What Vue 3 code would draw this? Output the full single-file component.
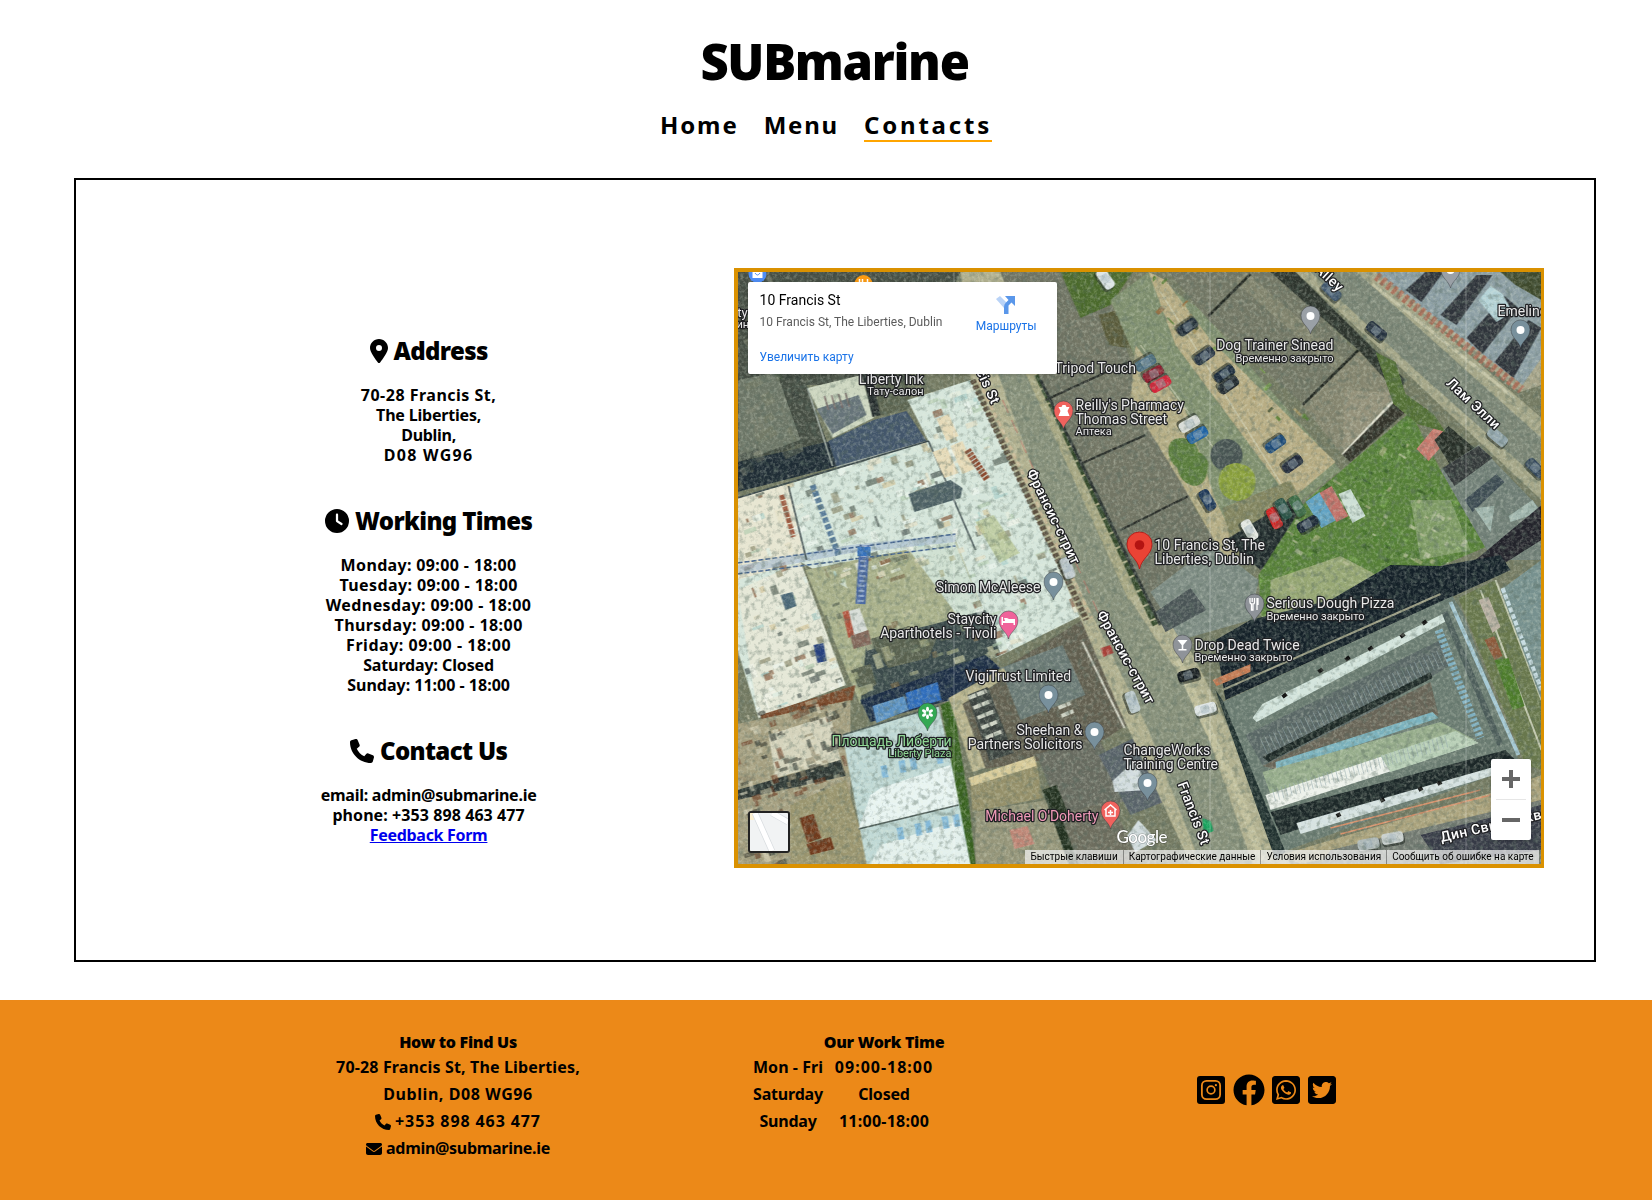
<script setup>
const icons = {
  pin: { w: 384, d: 'M215.7 499.2C267 435 384 279.4 384 192C384 86 298 0 192 0S0 86 0 192c0 87.4 117 243 168.3 307.2c12.3 15.3 35.1 15.3 47.4 0zM192 128a64 64 0 1 1 0 128 64 64 0 1 1 0-128z' },
  clock: { w: 512, d: 'M256 0a256 256 0 1 1 0 512A256 256 0 1 1 256 0zM232 120V256c0 8 4 15.5 10.7 20l96 64c11 7.4 25.9 4.4 33.3-6.7s4.4-25.9-6.7-33.3L280 243.2V120c0-13.3-10.7-24-24-24s-24 10.7-24 24z' },
  phone: { w: 512, d: 'M164.9 24.6c-7.7-18.6-28-28.5-47.4-23.2l-88 24C12.1 30.2 0 46 0 64C0 311.4 200.6 512 448 512c18 0 33.8-12.1 38.6-29.5l24-88c5.3-19.4-4.6-39.7-23.2-47.4l-96-40c-16.3-6.8-35.2-2.1-46.3 11.6L304.7 368C234.3 334.7 177.3 277.7 144 207.3L193.3 167c13.7-11.2 18.4-30 11.6-46.3l-40-96z' },
  mail: { w: 512, d: 'M48 64C21.5 64 0 85.5 0 112c0 15.1 7.1 29.3 19.2 38.4L236.8 313.6c11.4 8.5 27 8.5 38.4 0L492.8 150.4c12.1-9.1 19.2-23.3 19.2-38.4c0-26.5-21.5-48-48-48H48zM0 176V384c0 35.3 28.7 64 64 64H448c35.3 0 64-28.7 64-64V176L294.4 339.2c-22.8 17.1-54 17.1-76.8 0L0 176z' },
}

// Each line is [text, tracking in px]
const sections = [
  { title: 'Address', icon: 'pin', lines: [['70-28 Francis St,', 0.5], ['The Liberties,', -0.2], ['Dublin,', -0.3], ['D08 WG96', 1.3]] },
  {
    title: 'Working Times',
    icon: 'clock',
    lines: [
      ['Monday: 09:00 - 18:00', 0.35], ['Tuesday: 09:00 - 18:00', 0.4], ['Wednesday: 09:00 - 18:00', 0.4],
      ['Thursday: 09:00 - 18:00', 0.43], ['Friday: 09:00 - 18:00', 0.53], ['Saturday: Closed', -0.12], ['Sunday: 11:00 - 18:00', 0],
    ],
  },
  { title: 'Contact Us', icon: 'phone', lines: [['email: admin@submarine.ie', -0.26], ['phone: +353 898 463 477', 0.08]], link: 'Feedback Form' },
]

const hours = [
  [['Mon - Fri', 0.05], ['09:00-18:00', 1]],
  [['Saturday', -0.2], ['Closed', -0.2]],
  [['Sunday', -0.2], ['11:00-18:00', 0.25]],
]
const track = (n) => ({ letterSpacing: n + 'px' })

// Seeded generator, so the ground detail is the same on every load
function scatter(seed, count, [x0, y0, x1, y1], size, angle, colors) {
  let s = seed
  const rnd = () => ((s = (s * 16807) % 2147483647) / 2147483647)
  return Array.from({ length: count }, () => ({
    x: x0 + rnd() * (x1 - x0),
    y: y0 + rnd() * (y1 - y0),
    w: size * (0.4 + rnd()),
    h: size * (0.2 + rnd() * 0.5),
    a: angle + (rnd() > 0.7 ? 90 : 0),
    c: colors[Math.floor(rnd() * colors.length)],
  }))
}

const details = [
  { clip: 'site', items: scatter(11, 620, [738, 375, 1090, 780], 10, -20, ['#8b8a6d', '#f4f6ec', '#58645a', '#d3c49a', '#a9cfca', '#845a3e', '#eef6f0', '#b4ccb0', '#e6e0c6', '#4a5552', '#dfeee6', '#e8efe0']) },
  { clip: 'yard', items: scatter(23, 110, [738, 540, 1000, 760], 11, -18, ['#a3a980', '#5b6655', '#c4c6a0', '#7a6a4c', '#8c997a', '#a9ad87']) },
  { clip: 'green', items: scatter(37, 520, [1200, 420, 1500, 660], 7, 30, ['#3d6a28', '#5f9040', '#7fae55', '#2f5424', '#b5b68c', '#4e8033', '#d2d4b8']) },
  { clip: 'topleft', items: scatter(53, 90, [738, 272, 920, 490], 16, 65, ['#5a6153', '#2f3835', '#7a7f68', '#3d4b2f', '#8b8d79']) },
  { clip: 'lowleft', items: scatter(71, 200, [738, 700, 850, 864], 9, -18, ['#dfdac0', '#3b3d33', '#8f8669', '#6b3b22', '#bab596', '#242a26']) },
  { clip: 'hedge', items: scatter(91, 130, [1140, 272, 1340, 470], 7, 45, ['#4f7b2d', '#2d3f22', '#a0905b', '#6c9a3c', '#9a6b3c']) },
]

const cars = [
  [1187, 327, 145, '#1c2733'], [1204, 356, 145, '#263241'], [1224, 374, 145, '#1d2c3d'], [1228, 385, 145, '#222a30'],
  [1275, 444, 145, '#1d4a78'], [1292, 464, 145, '#222a3a'], [1207, 500, 60, '#1c3658'], [1153, 374, 150, '#8d1f2f'],
  [1160, 384, 150, '#d3263a'], [1145, 363, 150, '#4b6d80'], [1189, 424, 150, '#d8dcd8'], [1197, 435, 150, '#1f63a5'],
  [1376, 331, 40, '#24303f'], [1331, 291, 45, '#40566d'], [1497, 437, 40, '#8fa2a8'], [1535, 468, 45, '#33465a'],
  [1274, 518, 65, '#cf2525'], [1283, 509, 60, '#2c5448'], [1297, 506, 60, '#3d6b46'], [1249, 530, 60, '#e6e9e4'],
  [1307, 524, -30, '#1a2635'], [1188, 675, -15, '#141a1e'], [1205, 709, -15, '#dfe5e6'], [1132, 702, 70, '#bcc9cc'],
  [1368, 844, -10, '#aeb8b8'], [1392, 838, -10, '#c8cfce'], [1105, 279, 55, '#dfe7e8'], [1067, 568, 70, '#c3ccd0'],
]

const pins = [
  { x: 1063, y: 429, c: '#f0625d', g: 'bag' },
  { x: 1310, y: 334, c: '#9aa0a6', g: 'dot' },
  { x: 1450, y: 288, c: '#9aa0a6', g: 'dot' },
  { x: 1520, y: 348, c: '#78909c', g: 'dot' },
  { x: 1053, y: 600, c: '#78909c', g: 'dot' },
  { x: 1008, y: 639, c: '#f0629a', g: 'bed' },
  { x: 1048, y: 713, c: '#78909c', g: 'dot' },
  { x: 1094, y: 750, c: '#78909c', g: 'dot' },
  { x: 1147, y: 801, c: '#78909c', g: 'dot' },
  { x: 927, y: 731, c: '#34a853', g: 'flower' },
  { x: 1110, y: 829, c: '#f0625d', g: 'house' },
  { x: 1254, y: 622, c: '#8f9399', g: 'fork' },
  { x: 1182, y: 663, c: '#8f9399', g: 'glass' },
]

const labels = [
  { x: 923, y: 384, t: 'Liberty Ink', a: 'end' },
  { x: 923, y: 395, t: 'Тату-салон', a: 'end', s: 11 },
  { x: 1054, y: 373, t: 'Tripod Touch' },
  { x: 1075, y: 410, t: "Reilly's Pharmacy" },
  { x: 1075, y: 424, t: 'Thomas Street' },
  { x: 1075, y: 435, t: 'Аптека', s: 11 },
  { x: 1333, y: 350, t: 'Dog Trainer Sinead', a: 'end' },
  { x: 1333, y: 362, t: 'Временно закрыто', a: 'end', s: 11 },
  { x: 1497, y: 316, t: 'Emeline' },
  { x: 1154, y: 550, t: '10 Francis St, The' },
  { x: 1154, y: 564, t: 'Liberties, Dublin' },
  { x: 1040, y: 592, t: 'Simon McAleese', a: 'end' },
  { x: 996, y: 624, t: 'Staycity', a: 'end' },
  { x: 996, y: 638, t: 'Aparthotels - Tivoli', a: 'end' },
  { x: 965, y: 681, t: 'VigiTrust Limited' },
  { x: 1082, y: 735, t: 'Sheehan &', a: 'end' },
  { x: 1082, y: 749, t: 'Partners Solicitors', a: 'end' },
  { x: 1123, y: 755, t: 'ChangeWorks' },
  { x: 1123, y: 769, t: 'Training Centre' },
  { x: 1266, y: 608, t: 'Serious Dough Pizza' },
  { x: 1266, y: 620, t: 'Временно закрыто', s: 11 },
  { x: 1194, y: 650, t: 'Drop Dead Twice' },
  { x: 1194, y: 661, t: 'Временно закрыто', s: 11 },
  { x: 951, y: 746, t: 'Площадь Либерти', a: 'end', c: '#8fd694' },
  { x: 951, y: 757, t: 'Liberty Plaza', a: 'end', c: '#8fd694', s: 11 },
  { x: 1098, y: 821, t: "Michael O'Doherty", a: 'end', c: '#f09ab8' },
  { x: 732, y: 317, t: 'rty', s: 13 },
  { x: 736, y: 328, t: 'ин', s: 11 },
]

const streets = [
  { x: 1026, y: 472, r: 64, t: 'Франсис-стрит' },
  { x: 1096, y: 614, r: 61, t: 'Франсис-стрит' },
  { x: 972, y: 364, r: 65, t: 'ncis St' },
  { x: 1177, y: 784, r: 69, t: 'Francis St' },
  { x: 1445, y: 384, r: 43, t: 'Лам Элли' },
  { x: 1305, y: 262, r: 43, t: 'n Alley' },
  { x: 1441, y: 842, r: -13, t: 'Дин Свифт сквер' },
]
const legal = ['Быстрые клавиши', 'Картографические данные', 'Условия использования', 'Сообщить об ошибке на карте']
const ribs = Array.from({ length: 42 }, (_, i) => i)
</script>

<template>
  <div class="page">
    <header class="header">
      <h1 class="brand">SUBmarine</h1>
      <nav class="nav">
        <a class="home">Home</a><a class="menu">Menu</a><a class="active">Contacts</a>
      </nav>
    </header>

    <main class="frame">
      <div class="info">
        <section v-for="s in sections" :key="s.title" class="block">
          <h2>
            <svg class="icon" :viewBox="`0 0 ${icons[s.icon].w} 512`"><path :d="icons[s.icon].d" fill-rule="evenodd" /></svg>
            <span>{{ s.title }}</span>
          </h2>
          <p v-for="l in s.lines" :key="l[0]" :style="track(l[1])">{{ l[0] }}</p>
          <p v-if="s.link"><a class="link">{{ s.link }}</a></p>
        </section>
      </div>

      <div class="map">
        <svg class="ground" viewBox="737.5 272 803 592" preserveAspectRatio="none">
          <defs>
            <filter id="grain" x="0" y="0" width="100%" height="100%">
              <feTurbulence type="fractalNoise" baseFrequency="0.3" numOctaves="4" seed="4" />
              <feColorMatrix type="matrix" values="0 0 0 0 0.85  0 0 0 0 0.9  0 0 0 0 0.75  1.6 1.6 0 0 -1.4" />
            </filter>
            <filter id="grainDark" x="0" y="0" width="100%" height="100%">
              <feTurbulence type="fractalNoise" baseFrequency="0.18" numOctaves="4" seed="9" />
              <feColorMatrix type="matrix" values="0 0 0 0 0.1  0 0 0 0 0.15  0 0 0 0 0.12  2 2 0 0 -1.9" />
            </filter>
            <clipPath id="site"><path d="M738 498L788 484 928 441 907 400 970 380 1082 615 995 658 950 550 850 590 800 562 845 685 758 718 738 650z" /></clipPath>
            <clipPath id="yard"><path d="M805 570L955 540 1000 655 860 705z" /></clipPath>
            <clipPath id="green"><path d="M1306 500L1410 412 1440 470 1490 545 1440 566 1262 640 1258 575z" /></clipPath>
            <clipPath id="topleft"><path d="M738 272H960L905 385 806 385 835 465 738 490z" /></clipPath>
            <clipPath id="lowleft"><path d="M738 718L845 685 850 864 738 864z" /></clipPath>
            <clipPath id="hedge"><path d="M1152 272L1180 285 1330 440 1318 456 1152 310z" /></clipPath>
          </defs>
          <rect x="737" y="272" width="804" height="592" fill="#747a62" />

          <!-- north-west roofs -->
          <path d="M737 272H960L905 385 806 385 835 465 737 490z" fill="#454d43" />
          <path d="M738 380L776 372 800 440 738 462z" fill="#6d7667" />
          <path d="M737 462L835 440 838 466 737 492z" fill="#1f2c35" />
          <g :clip-path="`url(#${details[3].clip})`" opacity=".4">
            <rect v-for="(r, i) in details[3].items" :key="i" :x="r.x" :y="r.y" :width="r.w" :height="r.h" :fill="r.c" :transform="`rotate(${r.a} ${r.x} ${r.y})`" />
          </g>
          <path d="M807 388L861 375 873 418 832 438z" fill="#cdd6c0" />
          <path d="M816 409L858 395 866 415 832 434z" fill="#67747a" />
          <path d="M824 396l4 14M831 395l4 14M838 394l4 14M845 393l4 14" stroke="#7a6b68" stroke-width="1.5" />
          <path d="M828 441L873 420 906 411 926 441 836 467z" fill="#43566b" />
          <path d="M866 385L907 382 912 408 878 416z" fill="#5c6450" />
          <path d="M862 375L872 417 880 415 870 373z" fill="#232a2b" />
          <path d="M807 388L832 466M836 467L928 441" stroke="#aab4ac" stroke-width="1.5" />

          <!-- construction site -->
          <path d="M737 498L788 484 928 441 907 400 970 380 1082 615 995 658 950 550 850 590 800 562 845 685 758 718 737 650z" fill="#d6e6dc" />
          <path d="M737 498L788 484 805 560 737 580z" fill="#e8e6d2" />
          <path d="M737 590L800 562 845 685 758 718z" fill="#e6e8d8" />
          <path d="M805 570L955 540 1000 655 860 705z" fill="#a9b08a" />
          <path d="M905 545L950 530 1000 655 960 620z" fill="#cfe0d2" />
          <path d="M866 640L930 625 985 610 1000 655 860 705z" fill="#3b4a4b" />
          <path d="M850 670l20-6 6 20-14 12zM868 640l40-14 30 8-10 24-40 10z" fill="#59614f" />
          <g v-for="d in details.slice(0, 2)" :key="d.clip" :clip-path="`url(#${d.clip})`" opacity=".7">
            <rect v-for="(r, i) in d.items" :key="i" :x="r.x" :y="r.y" :width="r.w" :height="r.h" :fill="r.c" :transform="`rotate(${r.a} ${r.x} ${r.y})`" />
          </g>
          <path d="M737 570L850 549 955 538" stroke="#a9bdd2" stroke-width="8" fill="none" opacity=".7" />
          <path d="M737 563L955 534M737 574L955 546" stroke="#42618c" stroke-width="1.500" stroke-dasharray="5 2" />
          <path d="M864 545L860 604" stroke="#4a69a3" stroke-width="10" />
          <path d="M864 545L860 604" stroke="#8fa6cd" stroke-width="6" stroke-dasharray="2 3" />
          <path d="M812 485L838 555" stroke="#587b99" stroke-width="6" stroke-dasharray="5 2" />
          <path d="M857 547h13v9h-13z" fill="#3571bd" />
          <path d="M845 612l14-4 8 22-16 8z" fill="#d8ddd8" /><path d="M842 612l6-2 6 26-6 2z" fill="#b0523d" /><path d="M850 636l18-6 3 14-18 5z" fill="#82675a" />
          <path d="M788 486L806 560M928 441L975 550M737 498L928 441" stroke="#384549" stroke-width="1.500" fill="none" />
          <path d="M908 494L950 480 962 488 960 498 914 512z" fill="#4d6065" />
          <path d="M936 419L948 414 958 436 946 441zM932 452l14-5 12 26-14 5zM950 446l12-5 12 28-12 5z" fill="#e6dab8" />
          <path d="M967 450L987 480" stroke="#8c4a30" stroke-width="7" stroke-dasharray="3 1" /><path d="M781 495l12 42" stroke="#a05a40" stroke-width="5" stroke-dasharray="5 1" />
          <path d="M975 522l18-7 26 38-20 10z" fill="#b3c08a" opacity=".7" />
          <path d="M760 715L855 685 852 700 762 728z" fill="#7a4a2c" />
          <path d="M813 645l10-2 3 18-9 2z" fill="#26407e" /><path d="M780 595l12-3 4 14-11 4z" fill="#4a6778" />

          <!-- south-west -->
          <path d="M737 724L850 700 850 864 737 864z" fill="#a59f80" />
          <path d="M768 735L830 715 840 760 775 778z" fill="#d5d3bc" />
          <path d="M737 790L840 760 845 776 737 800z" fill="#2f3835" />
          <g :clip-path="`url(#${details[4].clip})`" opacity=".6">
            <rect v-for="(r, i) in details[4].items" :key="i" :x="r.x" :y="r.y" :width="r.w" :height="r.h" :fill="r.c" :transform="`rotate(${r.a} ${r.x} ${r.y})`" />
          </g>
          <path d="M790 805L845 780 870 864H790z" fill="#9b9670" />
          <path d="M799 818l14-4 8 24-14 5zM806 844l24-7 4 12-24 6z" fill="#703a1c" />
          <path d="M860 700L985 655 1000 668 950 700 870 722z" fill="#1c2d45" />
          <path d="M872 706L904 696 908 710 876 723z" fill="#5b92c4" />
          <path d="M905 693L937 682 941 700 908 710z" fill="#2f6dbc" />
          <path d="M842 735L938 706 974 864H866z" fill="#c0d9d6" />
          <path d="M858 829L870 795 880 788 950 765 960 804z" fill="#e9f5f3" />
          <path d="M870 864L880 845 960 820 970 864z" fill="#e4f1ee" />
          <path d="M842 735L938 706M858 829L958 805" stroke="#4c5a56" stroke-width="1.500" />
          <path d="M880 766l6-1 2 12-6 1zM898 761l6-1 2 12-6 1zM909 758l6-1 2 12-6 1zM935 752l6-1 2 12-6 1zM896 828l6-1 2 12-6 1zM914 824l6-1 2 12-6 1zM924 821l6-1 2 12-6 1zM941 817l6-1 2 12-6 1zM952 815l6-1 2 12-6 1z" fill="#83b9d9" />
          <path d="M940 705L952 700 968 800 975 864H970z" fill="#38611f" />

          <!-- Vigitrust block -->
          <path d="M948 698L1003 668 1082 620 1126 725 1080 755 975 770z" fill="#625f50" />
          <path d="M1000 668L1062 645 1085 695 1020 720z" fill="#6b7a76" />
          <path d="M948 698L1003 668 1008 676 962 704 985 768 972 772z" fill="#b9b48e" />
          <path d="M967 695l20-8 26 66-24 8z" fill="#3b423f" />
          <path d="M968 698l18-7M973 708l17-7M977 718l17-7M981 728l17-7M985 738l17-7M1058 708l12-5M1061 716l12-5" stroke="#cfd3c5" stroke-width="4" stroke-dasharray="8 1" />
          <path d="M1082 642L1124 728" stroke="#d6d6c8" stroke-width="2" />
          <path d="M970 782L1036 762 1042 798 972 812z" fill="#95906a" />
          <path d="M968 778L1034 756 1036 766 971 786z" fill="#d8cb9a" />
          <path d="M1036 754L1098 738 1130 800 1060 815z" fill="#686b60" />
          <path d="M975 812L1046 800 1070 864H975z" fill="#96967a" />
          <path d="M1009 830l18-4 7 18-20 5z" fill="#c08676" />
          <path d="M1042 790L1056 785 1088 864H1068z" fill="#22301f" />
          <path d="M1098 755L1150 730 1168 800 1130 815z" fill="#59636a" />
          <path d="M1112 781L1135 760 1148 790 1114 792zM1120 845l18-25 18 20-24 14z" fill="#d3dde0" />
          <path d="M1060 815L1110 800 1140 864H1078z" fill="#6d6d5e" />

          <!-- Francis Street -->
          <path d="M960 272H1035L1100 430 1160 590 1215 700 1290 864H1190L1120 712 1055 560 970 378z" fill="#b1b08f" />
          <path d="M985 340L1020 345 1130 600 1195 700 1252 864H1200L1148 730 1070 570z" fill="#87907a" />
          <path d="M1012 345L1042 360 1142 590 1128 600z" fill="#a7a783" />
          <path d="M1030 360L1155 625" stroke="#33482a" stroke-width="6" stroke-dasharray="14 2" />
          <path d="M972 380L1086 620" stroke="#5b4f3f" stroke-width="6" stroke-dasharray="4 2" />
          <path d="M978 380L1091 618" stroke="#c9b896" stroke-width="3" stroke-dasharray="6 3" />
          <path d="M1002 400L1110 640" stroke="#bd7c6d" stroke-width="1" stroke-dasharray="14 8" />
          <path d="M1172 650L1240 800 1262 864" stroke="#c1bf9c" stroke-width="8" fill="none" />
          <path d="M1100 648l10-3 3 8-10 4z" fill="#a8423a" />
          <path d="M1202 818l8 3 3 10-10 4z" fill="#16a35d" />

          <!-- east roofs -->
          <path d="M1000 272H1100L1150 420 1195 510 1228 560 1160 625 1080 465 1040 380z" fill="#6f7363" />
          <path d="M1062 315L1092 307 1140 395 1190 497 1120 530 1082 462 1100 400z" fill="#737665" />
          <path d="M1045 400L1128 362M1082 463L1145 435M1120 530L1188 496" stroke="#282c28" stroke-width="2" />
          <path d="M1040 380L1160 625" stroke="#2b3230" stroke-width="3" />
          <path d="M1060 272H1132L1110 305 1080 318z" fill="#4b6a2c" />
          <path d="M1098 315L1125 308 1140 350 1108 345z" fill="#5a5b3b" />

          <!-- car park -->
          <path d="M1110 300L1148 272 1200 310 1340 470 1225 560 1195 500z" fill="#80906f" />
          <path d="M1148 272L1165 280 1210 340 1335 462 1290 500 1175 345z" fill="#b8ad84" />
          <path d="M1135 345L1185 410 1215 500 1240 550 1225 560 1185 490 1130 400z" fill="#b5ad85" />
          <path d="M1160 292L1282 486M1140 345L1250 500" stroke="#d3d4ba" stroke-width="1" />
          <g :clip-path="`url(#${details[5].clip})`" opacity=".8">
            <rect v-for="(r, i) in details[5].items" :key="i" :x="r.x" :y="r.y" :width="r.w" :height="r.h" :fill="r.c" :transform="`rotate(${r.a} ${r.x} ${r.y})`" />
          </g>
          <path d="M1168 272H1275L1397 393 1342 455 1300 402 1208 320z" fill="#737765" />
          <path d="M1235 282L1246 272 1345 360 1335 370z" fill="#81836d" />
          <path d="M1270 272H1295L1405 380 1397 395 1358 350z" fill="#2d342d" />
          <path d="M1302 405L1358 350 1397 393 1342 455z" fill="#85856f" />
          <path d="M1344 390L1397 393 1342 455z" fill="#94917a" />
          <path d="M1208 316L1250 274M1302 405L1358 350" stroke="#20251f" stroke-width="2.500" />
          <path d="M1342 455L1397 397" stroke="#e4e3d2" stroke-width="3" />
          <path d="M1342 455L1397 399 1405 412 1350 462z" fill="#33332a" />
          <path d="M1222 508L1290 480 1300 500 1235 560z" fill="#838560" />
          <path d="M1225 540L1290 500 1330 530 1260 570z" fill="#1f292b" />
          <circle cx="1226" cy="455" r="16" fill="#38434b" opacity=".8" />
          <path d="M1168 450q0-12 14-12 14 2 16 14 12 6 9 18-2 16-14 16-14-4-16-18-10-8-9-18z" fill="#5a7d3c" />
          <path d="M1218 480q2-16 18-17 18 2 19 18 0 18-18 20-18-2-19-21z" fill="#8aa03c" />

          <!-- Lamb Alley -->
          <path d="M1295 272H1375L1541 418V500L1445 410 1392 360z" fill="#a5a688" />
          <path d="M1310 272H1356L1541 438V482L1415 370z" fill="#7c8676" />
          <path d="M1375 272H1541V385L1520 392 1375 275z" fill="#a7a489" />
          <path d="M1375 272L1522 385 1541 358V272z" fill="#8d9fa5" />
          <path d="M1405 290L1425 272h18l-22 30zM1440 315l36-40h16l-36 50zM1466 338l38-42 14 12-36 46zM1494 362l34-42 13 8-28 50z" fill="#2f343b" />
          <path d="M1376 276L1521 390" stroke="#a8705a" stroke-width="9" stroke-dasharray="4 3" />
          <path d="M1372 284L1514 398" stroke="#c3c2a4" stroke-width="3" />
          <path d="M1478 300l12-14 12 8 10 18-16 10z" fill="#b5d3d8" />
          <path d="M1500 272H1541V300L1515 285z" fill="#3f4a2d" />

          <!-- overgrown lot -->
          <path d="M1306 500L1410 412 1440 470 1490 545 1440 566 1262 640 1258 575z" fill="#578038" />
          <g :clip-path="`url(#${details[2].clip})`" opacity=".6">
            <rect v-for="(r, i) in details[2].items" :key="i" :x="r.x" :y="r.y" :width="r.w" :height="r.h" :fill="r.c" :transform="`rotate(${r.a} ${r.x} ${r.y})`" />
          </g>
          <path d="M1270 580L1340 556 1386 580 1340 605 1270 636z" fill="#b9ba94" opacity=".65" />
          <path d="M1410 500L1450 500 1470 550 1420 560z" fill="#c9cbb8" opacity=".35" />
          <path d="M1305 502l14-10 17 28-15 8z" fill="#62a3c4" />
          <path d="M1319 493l12-7 17 30-12 6z" fill="#c07068" />
          <path d="M1338 494l12-5 15 27-13 7z" fill="#cddfd6" />
          <path d="M1416 449l20-24 13 12-21 24z" fill="#c87a6e" />
          <path d="M1434 440l14-14 40 34-34 12z" fill="#262d26" />
          <path d="M1375 352l20 10 10 32 28 20 12 18-28-8-24-20z" fill="#536f35" />
          <path d="M1440 470L1478 445 1541 510V560L1492 560z" fill="#728078" />
          <path d="M1442 468L1478 446 1492 458 1454 486z" fill="#34393a" />
          <path d="M1464 500L1496 474 1504 482 1472 512z" fill="#3c4a52" />
          <path d="M1474 508L1494 506 1490 532zM1508 516l24-16 8 12-30 10z" fill="#a3b8b0" />
          <path d="M1475 560L1541 505V540L1490 572z" fill="#22222a" />
          <path d="M1150 592L1212 545 1258 580 1250 620 1180 640z" fill="#7e8c84" />
          <path d="M1155 612L1190 588 1206 610 1165 632z" fill="#4a5456" />
          <path d="M1215 640L1250 620 1330 600 1390 565 1440 566 1500 555 1510 570 1225 700z" fill="#142028" />
          <path d="M1212 680L1250 664 1250 672 1216 686z" fill="#c47a52" />

          <!-- market hall -->
          <path d="M1222 702L1452 596 1462 612 1520 765 1282 852z" fill="#6b7c72" />
          <path d="M1222 690L1440 594" stroke="#9a9b82" stroke-width="2" />
          <path d="M1252 718L1262 704 1446 612 1448 620 1256 722z" fill="#d3e4dd" />
          <path d="M1245 735L1440 640 1450 665 1275 770 1262 765z" fill="#5a6766" />
          <path d="M1262 757L1430 672 1432 678 1268 762z" fill="#1d2826" />
          <path d="M1262 766L1430 682 1438 715 1278 770z" fill="#686457" />
          <path d="M1275 762L1432 712 1438 718 1276 772z" fill="#7cb3bf" />
          <path d="M1262 772L1440 722 1475 740 1272 800z" fill="#97ad8c" />
          <path d="M1265 795L1455 732 1478 743 1270 810z" fill="#eef2ec" />
          <path d="M1380 756L1455 731 1478 743 1390 772z" fill="#b7ceb6" />
          <path d="M1270 812L1505 750 1515 760 1280 835z" fill="#1c2728" />
          <path d="M1296 823L1500 765 1510 770 1300 834z" fill="#d6e2e2" />
          <path d="M1450 602L1518 755" stroke="#a5c8d4" stroke-width="4" />
          <path d="M1444 612L1500 745" stroke="#4c5c5a" stroke-width="6" />
          <path d="M1438 630L1480 738" stroke="#7fb0c2" stroke-width="8" stroke-dasharray="3 2" />
          <path v-for="i in ribs" :key="i" :d="`M${1260 + i * 4.4} ${739 - i * 2.2}l7 15M${1272 + i * 4.2} ${789 - i * 1.3}l3 12`" stroke="#93a8ad" stroke-width=".8" opacity=".7" />
          <path d="M1282 697l4-3M1318 672l4-3M1345 660l4-3M1368 650l4-3M1400 637l4-3M1422 624l4-3M1336 816l4-2M1380 801l4-2M1418 790l4-2M1437 784l4-2" stroke="#111" stroke-width="4" />
          <path d="M1215 690L1222 700 1285 852 1275 860z" fill="#20302f" />
          <path d="M1458 598L1495 580 1541 690V770L1525 765z" fill="#68774c" />
          <path d="M1480 590L1541 750M1495 580L1541 700" stroke="#c1c7ae" stroke-width="2" />
          <path d="M1478 600l10-3 12 30-8 6z" fill="#b9b0a2" /><path d="M1484 640l10-4 8 20-8 4z" fill="#8c5a3c" />
          <path d="M1494 660l18 50 12-4-16-48z" fill="#4d7c2b" />
          <path d="M1500 590L1541 560V700z" fill="#77918f" />
          <path d="M1502 588L1541 690" stroke="#c7dce2" stroke-width="4" stroke-dasharray="5 2" />
          <path d="M1280 855L1500 790 1541 775V815L1300 864z" fill="#aaa27c" />
          <path d="M1330 850L1541 800V864H1320z" fill="#737a72" />
          <path d="M1420 835L1541 805V850L1440 864z" fill="#363a46" />
          <path d="M1330 828L1480 790M1340 834L1490 795" stroke="#d8906a" stroke-width="1.500" />
          <g v-for="(c, i) in cars" :key="i" :transform="`translate(${c[0]} ${c[1]}) rotate(${c[2]})`">
            <rect x="-11" y="-4" width="23" height="12" rx="4" fill="#1d2420" opacity=".6" />
            <rect x="-11" y="-5.500" width="22" height="11" rx="4" :fill="c[3]" />
            <rect x="-5" y="-4" width="9" height="8" rx="2" fill="#9db0ba" opacity=".45" />
          </g>
          <rect x="737" y="272" width="804" height="592" filter="url(#grain)" opacity=".3" />
          <rect x="737" y="272" width="804" height="592" filter="url(#grainDark)" opacity=".4" />
          <path d="M953.500 272V864M1209.500 272V864M1465.500 272V864" stroke="#fff" opacity=".28" />

          <circle cx="757" cy="274" r="9" fill="#4f8df5" /><path d="M752 271h10v7h-10z" fill="#fff" /><path d="M754.500 273q2.500 4 5 0" stroke="#4f8df5" fill="none" />
          <circle cx="863" cy="284" r="9" fill="#fb9b13" /><path d="M859 279v6M862 279v6M867 279v6" stroke="#fff" stroke-width="1.500" />

          <g class="labels">
            <text v-for="(l, i) in labels" :key="i" :x="l.x" :y="l.y" :text-anchor="l.a || 'start'" :fill="l.c || '#e9e9e9'" :font-size="l.s || 14">{{ l.t }}</text>
          </g>
          <g class="labels street">
            <text v-for="(l, i) in streets" :key="i" :transform="`translate(${l.x} ${l.y}) rotate(${l.r})`" fill="#fff" font-size="14">{{ l.t }}</text>
          </g>

          <g v-for="(p, i) in pins" :key="i" :transform="`translate(${p.x} ${p.y})`">
            <path d="M0 0C-1.500-7-9.500-10-9.500-18.500A9.500 9.500 0 0 1 9.500-18.500C9.500-10 1.500-7 0 0z" :fill="p.c" stroke="#3c4043" stroke-opacity=".6" stroke-width=".8" />
            <circle v-if="p.g === 'dot'" cy="-18" r="4" fill="#fff" />
            <path v-if="p.g === 'bag'" d="M-5-22h3l1-2h3l1 2h3l-2 4 2 5H-5l2-5z" fill="#fff" />
            <path v-if="p.g === 'bed'" d="M-7-22h1.500v4h2l-1-3h3l2 1h6v6H5v-2H-5.500v2H-7z" fill="#fff" />
            <g v-if="p.g === 'flower'" fill="#fff"><ellipse v-for="k in 6" :key="k" cx="0" cy="-21.800" rx="1.500" ry="2.400" :transform="`rotate(${k * 60} 0 -18)`" /></g>
            <path v-if="p.g === 'house'" d="M-6-19L0-24 6-19M-4.500-20v7h9v-7M0-19v5M-2.500-16.500h5" fill="none" stroke="#fff" stroke-width="1.500" />
            <path v-if="p.g === 'fork'" d="M-4.500-24v4q0 2 1.500 2v6h1.500v-6q1.500 0 1.500-2v-4M-2.300-24v4M2.500-24v12M3.500-24v7" fill="none" stroke="#fff" stroke-width="1.300" />
            <path v-if="p.g === 'glass'" d="M-5-23H5L.8-18v4H4v1.500H-4V-14h3.200v-4z" fill="#fff" />
          </g>
          <g transform="translate(1139 569)">
            <path d="M0 0C-2-11-12.500-14-12.500-25A12.500 12 0 0 1 12.500-25C12.500-14 2-11 0 0z" fill="#ea4335" stroke="#b31412" stroke-width=".8" />
            <circle cy="-24" r="4.800" fill="#b31412" />
          </g>
          <text class="google" x="1116" y="843">Google</text>
        </svg>

        <div class="card">
          <div class="place">
            <strong>10 Francis St</strong>
            <span>10 Francis St, The Liberties, Dublin</span>
            <a>Увеличить карту</a>
          </div>
          <div class="route">
            <svg viewBox="0 0 20 20" width="20" height="20">
              <path d="M0 4L4 1 11 8 8 13z" fill="#b9d3f7" />
              <path d="M8 19v-7q0-3 2-4.500L12.500 5 9 1h10v10l-3.500-3.500-3 3V19z" fill="#5a97ea" />
            </svg>
            <a>Маршруты</a>
          </div>
        </div>

        <div class="layer">
          <svg viewBox="0 0 38 38" width="38" height="38"><path d="M0 0H38V38H0z" fill="#f1f3f4" /><path d="M0 0h4v7H0z" fill="#fbefd0" /><path d="M5 0L22 38M22 0L38 9" stroke="#d9dde0" stroke-width="6.500" /><path d="M5 0L22 38M22 0L38 9" stroke="#fff" stroke-width="5" /></svg>
        </div>

        <div class="zoom">
          <svg viewBox="0 0 40 81" width="40" height="81"><path d="M11 20H29M20 11V29M11 61H29" stroke="#666" stroke-width="4" /><path d="M5 40.500H35" stroke="#e6e6e6" /></svg>
        </div>

        <div class="legal"><span v-for="t in legal" :key="t">{{ t }}</span></div>
      </div>
    </main>

    <footer class="footer">
      <div class="find">
        <h4>How to Find Us</h4>
        <p :style="track(0.15)">70-28 Francis St, The Liberties,</p>
        <p :style="track(0.58)">Dublin, D08 WG96</p>
        <p :style="track(0.9)"><svg class="icon" viewBox="0 0 512 512"><path :d="icons.phone.d" /></svg><span>+353 898 463 477</span></p>
        <p><svg class="icon" viewBox="0 0 512 512"><path :d="icons.mail.d" /></svg><span>admin@submarine.ie</span></p>
      </div>
      <div class="hours">
        <span></span><h4>Our Work Time</h4>
        <template v-for="(h, i) in hours" :key="i"><p v-for="c in h" :key="c[0]" :style="track(c[1])">{{ c[0] }}</p></template>
      </div>
      <div class="social">
        <svg viewBox="0 0 448 512" width="28" height="32">
          <path d="M48 32h352a48 48 0 0 1 48 48v352a48 48 0 0 1-48 48H48a48 48 0 0 1-48-48V80a48 48 0 0 1 48-48z" />
          <rect x="78" y="110" width="292" height="292" rx="74" fill="none" stroke="#ec8918" stroke-width="29" />
          <circle cx="224" cy="256" r="62" fill="none" stroke="#ec8918" stroke-width="27" /><circle cx="302" cy="178" r="18" fill="#ec8918" />
        </svg>
        <svg viewBox="0 0 512 512" width="32" height="32"><path d="M504 256C504 119 393 8 256 8S8 119 8 256c0 123.780 90.690 226.380 209.250 245V327.690h-63V256h63v-54.640c0-62.150 37-96.480 93.670-96.480 27.140 0 55.520 4.840 55.520 4.840v61h-31.280c-30.800 0-40.410 19.120-40.410 38.730V256h68.780l-11 71.690h-57.780V501C413.310 482.380 504 379.780 504 256z" /></svg>
        <svg viewBox="0 0 448 512" width="28" height="32"><path d="M224 122.800c-72.700 0-131.800 59.100-131.900 131.800 0 24.900 7 49.200 20.200 70.100l3.100 5-13.300 48.600 49.900-13.100 4.800 2.900c20.200 12 43.400 18.400 67.100 18.400h.1c72.600 0 133.300-59.100 133.300-131.800 0-35.200-15.200-68.300-40.100-93.200-25-25-58-38.700-93.200-38.700zm77.500 188.400c-3.300 9.300-19.100 17.700-26.700 18.800-12.600 1.900-22.400.9-47.500-9.900-39.700-17.200-65.700-57.200-67.700-59.800-2-2.600-16.200-21.500-16.200-41s10.200-29.100 13.900-33.100c3.600-4 7.900-5 10.600-5 2.600 0 5.300 0 7.600.1 2.400.1 5.700-.9 8.900 6.800 3.300 7.900 11.200 27.400 12.200 29.400s1.700 4.300.3 6.900c-7.600 15.200-15.700 14.600-11.600 21.600 15.300 26.300 30.600 35.400 53.900 47.100 4 2 6.300 1.700 8.600-1 2.300-2.600 9.900-11.600 12.500-15.500 2.600-4 5.300-3.300 8.900-2 3.600 1.300 23.100 10.900 27.100 12.900s6.600 3 7.600 4.600c.9 1.900.9 9.900-2.400 19.100zM400 32H48C21.500 32 0 53.500 0 80v352c0 26.500 21.500 48 48 48h352c26.500 0 48-21.500 48-48V80c0-26.500-21.500-48-48-48zM223.900 413.200c-26.600 0-52.700-6.700-75.800-19.300L64 416l22.500-82.200c-13.900-24-21.200-51.300-21.200-79.300C65.400 167.100 136.500 96 223.900 96c42.400 0 82.200 16.500 112.200 46.500 29.900 30 47.900 69.800 47.900 112.200 0 87.400-72.700 158.500-160.100 158.500z" /></svg>
        <svg viewBox="0 0 448 512" width="28" height="32"><path d="M400 32H48C21.500 32 0 53.500 0 80v352c0 26.500 21.500 48 48 48h352c26.500 0 48-21.500 48-48V80c0-26.500-21.500-48-48-48zm-48.900 158.800c.2 2.800.2 5.700.2 8.500 0 86.700-66 186.600-186.600 186.600-37.200 0-71.700-10.800-100.700-29.400 5.300.6 10.400.8 15.800.8 30.700 0 58.900-10.400 81.400-28-28.800-.6-53-19.500-61.300-45.500 10.100 1.500 19.200 1.500 29.600-1.200-30-6.100-52.500-32.500-52.500-64.400v-.8c8.700 4.900 18.900 7.900 29.600 8.300a65.447 65.447 0 0 1-29.200-54.600c0-12.200 3.200-23.400 8.900-33.100 32.300 39.800 80.800 65.800 135.200 68.600-9.300-44.500 24-80.600 64-80.600 18.900 0 35.900 7.900 47.900 20.700 14.800-2.800 29-8.300 41.600-15.800-4.900 15.200-15.200 28-28.800 36.100 13.200-1.400 26-5.100 37.800-10.200-8.900 13.100-20.100 24.700-32.900 34z" /></svg>
      </div>
    </footer>
  </div>
</template>

<style>
body { background: #fff; }
</style>

<style scoped>
* { box-sizing: border-box; }
h1, h2, h4, p { margin: 0; white-space: nowrap; }
.page {
  display: flex;
  flex-direction: column;
  width: 1652px;
  height: 1200px;
  overflow: hidden;
  font: 700 16px/20px "Noto Sans", "Open Sans", sans-serif;
  letter-spacing: -0.3px;
  color: #000;
}
.header { display: flex; flex-direction: column; align-items: center; height: 178px; padding-top: 31px; }
.brand { font-size: 49px; line-height: 60px; font-weight: 900; letter-spacing: -1.3px; margin-left: 17px; }
.nav { display: flex; gap: 25px; margin-top: 18px; }
.nav a { font-size: 24px; line-height: 31px; height: 33px; border-bottom: 2px solid transparent; }
.nav .home { letter-spacing: 1.9px; }
.nav .menu { letter-spacing: 1.8px; }
.nav .active { letter-spacing: 2.8px; border-color: #ffa500; }
.frame { display: flex; width: 1522px; height: 784px; margin-left: 73.6px; border: 2px solid #000; padding: 88px 50px 0 0; }
.info { width: 706px; padding: 68px 0 0; text-align: center; flex: none; margin-right: -48px; }
.block { margin-bottom: 41px; }
.block h2 { display: flex; justify-content: center; align-items: center; gap: 6px; height: 30px; margin-bottom: 19px; font-size: 24px; line-height: 30px; font-weight: 900; letter-spacing: -0.65px; }
.icon { height: 1em; fill: #000; }
.link { color: #00e; text-decoration: underline; }
.map { position: relative; width: 810px; height: 600px; border: 4px solid #da9100; border-right-width: 3px; flex: none; overflow: hidden; font-family: Roboto, sans-serif; font-weight: 400; letter-spacing: 0; }
.ground { display: block; width: 100%; height: 100%; }
.labels { font-family: Roboto, sans-serif; paint-order: stroke; stroke: #202124; stroke-width: 2.5px; stroke-linejoin: round; letter-spacing: 0; }
.street { font-weight: 500; letter-spacing: 0.4px; }
.google { font: 500 17px Lato, sans-serif; fill: #fff; letter-spacing: -0.5px; paint-order: stroke; stroke: rgba(0, 0, 0, .35); stroke-width: 1px; }
.card { position: absolute; left: 10px; top: 10px; width: 309px; height: 92px; display: flex; justify-content: space-between; padding: 9px 20px 0 12px; background: #fff; border-radius: 2px; box-shadow: 0 1px 4px -1px rgba(0, 0, 0, .3); }
.place { display: flex; flex-direction: column; font-size: 12px; }
.place strong { font-size: 14px; font-weight: 400; line-height: 19px; }
.place span { color: #5b5b5b; line-height: 16px; margin-top: 4px; }
.card a { color: #1a73e8; line-height: 16px; }
.place a { margin-top: 19px; }
.route { display: flex; flex-direction: column; align-items: center; gap: 3px; font-size: 12px; padding-top: 4px; }
.layer { position: absolute; left: 10px; bottom: 11px; width: 42px; height: 42px; border: 2px solid #222; border-radius: 3px; overflow: hidden; }
.zoom { position: absolute; left: 753px; top: 487px; width: 40px; height: 81px; background: #fff; border-radius: 2px; box-shadow: 0 1px 4px -1px rgba(0, 0, 0, .3); }
.legal { position: absolute; right: 2px; bottom: 0; display: flex; height: 14px; font-size: 10px; line-height: 14px; }
.legal span { padding: 0 5px; background: rgba(245, 245, 245, .7); border-left: 1px solid rgba(0, 0, 0, .35); }
.legal span:first-child { border-left: 0; }
.footer { display: flex; height: 200px; margin-top: 38px; flex: none; background: #ec8918; text-align: center; padding-top: 32px; }
.footer h4 { font-weight: 900; font-size: 16px; line-height: 20px; margin-bottom: 2px; }
.footer p { line-height: 27px; }
.find { width: 300px; margin-left: 308px; }
.find p { display: flex; justify-content: center; align-items: center; gap: 4px; }
.hours { display: grid; grid-template-columns: 72px 120px; justify-items: center; align-content: start; width: 197px; margin-left: 144px; }
.social { display: flex; gap: 7.5px; margin: 42px 0 0 248px; height: 32px; }
</style>
